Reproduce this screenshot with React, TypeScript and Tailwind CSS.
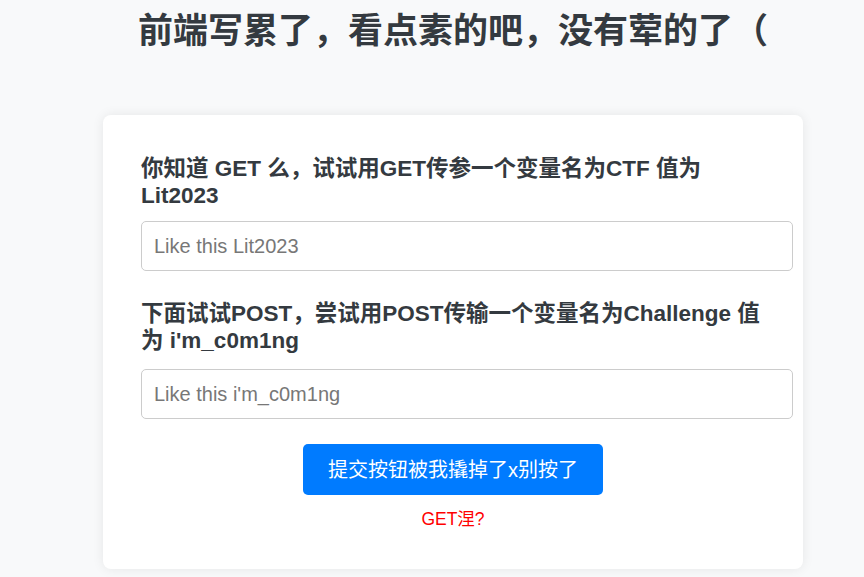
import React from 'react';

const font = { fontFamily: '"Liberation Sans", "Noto Sans CJK SC", sans-serif' };

const App: React.FC = () => {
    return (
        <div
            className="min-h-screen w-full bg-[#f8f9fa] flex flex-col items-center pl-[42px] pt-[10px]"
            style={font}
        >
            {/* Title */}
            <h1 className="text-[35px] leading-[42px] font-bold text-[#343a40] text-center">
                前端写累了，看点素的吧，没有荤的了（
            </h1>

            {/* Card */}
            <div className="mt-[63px] w-[700px] bg-white rounded-lg shadow-[0_0_12px_rgba(0,0,0,0.08)] pt-[40px] pb-[37px] px-[38px]">
                <form onSubmit={(e) => e.preventDefault()}>
                    <div>
                        <label className="block text-[22.5px] leading-[27px] font-bold text-[#343a40] mb-[12px]">
                            你知道 GET 么，试试用GET传参一个变量名为CTF 值为Lit2023
                        </label>
                        <input
                            type="text"
                            placeholder="Like this Lit2023"
                            className="block w-[652px] h-[50px] px-[12px] text-[20px] text-[#495057] placeholder:text-[#777] border border-[#ccc] rounded-[5px] outline-none"
                        />
                    </div>

                    <div className="mt-[29px]">
                        <label className="block text-[22.5px] leading-[27px] font-bold text-[#343a40] mb-[15px]">
                            下面试试POST，尝试用POST传输一个变量名为Challenge 值为 i'm_c0m1ng
                        </label>
                        <input
                            type="text"
                            placeholder="Like this i'm_c0m1ng"
                            className="block w-[652px] h-[50px] px-[12px] text-[20px] text-[#495057] placeholder:text-[#777] border border-[#ccc] rounded-[5px] outline-none"
                        />
                    </div>

                    <div className="flex justify-center mt-[25px]">
                        <button
                            type="button"
                            className="w-[300px] h-[51px] rounded-[5px] bg-[#007bff] text-white text-[20px]"
                        >
                            提交按钮被我撬掉了x别按了
                        </button>
                    </div>

                    <p className="mt-[12px] text-center text-[17.5px] leading-[25px] text-[#f00]">GET涅?</p>
                </form>
            </div>
        </div>
    );
};

export default App;
